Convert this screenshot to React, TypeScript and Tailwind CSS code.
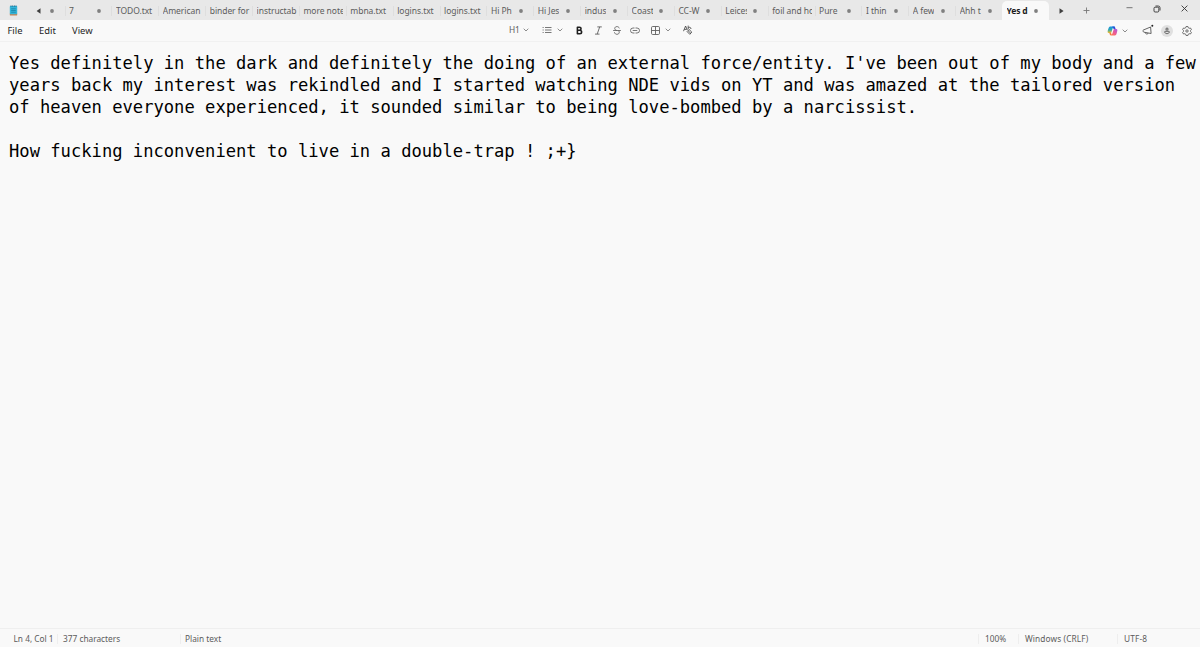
type Tab = {
  title: string;
  dirty?: boolean;
  active?: boolean;
};

const tabs: Tab[] = [
  { title: '7', dirty: true },
  { title: 'TODO.txt' },
  { title: 'American' },
  { title: 'binder for' },
  { title: 'instructab' },
  { title: 'more notes' },
  { title: 'mbna.txt' },
  { title: 'logins.txt' },
  { title: 'logins.txt' },
  { title: 'Hi Ph', dirty: true },
  { title: 'Hi Jess', dirty: true },
  { title: 'indus', dirty: true },
  { title: 'Coastal', dirty: true },
  { title: 'CC-W', dirty: true },
  { title: 'Leicest', dirty: true },
  { title: 'foil and hou' },
  { title: 'Pure', dirty: true },
  { title: 'I thin', dirty: true },
  { title: 'A few', dirty: true },
  { title: 'Ahh t', dirty: true },
  { title: 'Yes d', dirty: true, active: true },
];

const lines = [
  "Yes definitely in the dark and definitely the doing of an external force/entity. I've been out of my body and a few",
  'years back my interest was rekindled and I started watching NDE vids on YT and was amazed at the tailored version',
  'of heaven everyone experienced, it sounded similar to being love-bombed by a narcissist.',
  '',
  'How fucking inconvenient to live in a double-trap ! ;+}',
];

export default function App() {
  return (
    <div className="flex h-[647px] w-[1200px] flex-col overflow-hidden bg-[#f9f9f9] font-['Noto_Sans','Open_Sans',sans-serif] text-[#5c5c5c]">
      <TitleBar />
      <Toolbar />
      <main className="flex-1 pl-[9px] pt-[10px] font-['DejaVu_Sans_Mono',monospace] text-[17.15px] leading-[22px] text-black">
        {lines.map((line, i) => (
          <p key={i} className="h-[22px] whitespace-pre">{line}</p>
        ))}
      </main>
      <StatusBar />
    </div>
  );
}

function TitleBar() {
  return (
    <header className="flex h-5 shrink-0 bg-[#e8e8e8]">
      <div className="flex w-6 items-center pl-[9px]">
        <NotepadIcon />
      </div>
      <div className="flex w-[40.5px] items-center pl-[11.5px] pt-px">
        <svg width="5" height="6" viewBox="0 0 5 6"><path d="M4.5 0.3v5.4L0.6 3z" fill="#404040" /></svg>
        <UnsavedDot className="ml-[9px]" />
      </div>
      {tabs.map((tab, i) => (
        <TabItem key={i} tab={tab} />
      ))}
      <div className="flex flex-1 items-center pl-[10px] pt-px">
        <svg width="5" height="6" viewBox="0 0 5 6"><path d="M0.5 0.3v5.4L4.6 3z" fill="#404040" /></svg>
        <svg className="ml-[19px]" width="7" height="7" viewBox="0 0 7 7"><path d="M3.5 0.5v6M0.5 3.5h6" stroke="#777" strokeWidth="0.9" /></svg>
      </div>
      <div className="flex h-[17px] items-center">
        <svg className="mr-5" width="7" height="7" viewBox="0 0 7 7"><path d="M0.5 2.7h6" stroke="#555" strokeWidth="0.8" /></svg>
        <svg className="mr-5" width="8" height="8" viewBox="0 0 8 8" fill="none" stroke="#333" strokeWidth="0.9">
          <rect x="1" y="2.2" width="4.8" height="4.8" rx="1.1" />
          <path d="M2.5 1h2.7Q7 1 7 2.8v2.7" />
        </svg>
        <svg className="mr-3" width="7" height="7" viewBox="0 0 7 7"><path d="M0.6 0.6l5.8 5.8M6.4 0.6L0.6 6.4" stroke="#333" strokeWidth="0.9" /></svg>
      </div>
    </header>
  );
}

function UnsavedDot({ className = '' }: { className?: string }) {
  return (
    <svg className={`shrink-0 ${className}`} width="4" height="4" viewBox="0 0 4 4">
      <circle cx="2" cy="2" r="1.9" fill="#808080" />
    </svg>
  );
}

function TabItem({ tab }: { tab: Tab }) {
  return (
    <div
      className={`flex w-[46.88px] shrink-0 items-center text-[8.5px] leading-[18px] ${
        tab.active ? 'mt-px rounded-t-[5px] bg-[#f9f9f9] font-bold text-[#1c1c1c]' : 'pt-px'
      }`}
    >
      {!tab.active && <span className="-mr-px h-2.5 w-px bg-[#dedede]" />}
      <span
        className={`ml-[4.6px] overflow-hidden whitespace-nowrap ${tab.dirty ? 'w-[21.5px]' : 'w-[40px]'} ${
          tab.active ? 'tracking-[-0.2px]' : 'tracking-[-0.06px]'
        }`}
      >
        {tab.title}
      </span>
      {tab.dirty && <UnsavedDot className="ml-[6.3px]" />}
    </div>
  );
}

function Chevron({ className = '' }: { className?: string }) {
  return (
    <svg className={className} width="6" height="4" viewBox="0 0 6 4" fill="none">
      <path d="M0.7 0.7L3 3l2.3-2.3" stroke="#707070" strokeWidth="0.8" />
    </svg>
  );
}

function Toolbar() {
  return (
    <nav className="flex h-[22px] shrink-0 items-center border-b border-[#f1f1f1]">
      <div className="flex w-[509px] gap-[15.5px] pl-[7.5px] pt-px text-[9.4px] text-[#242424]">
        <span className="w-4">File</span>
        <span className="w-[17.5px]">Edit</span>
        <span>View</span>
      </div>

      <div className="flex flex-1 items-center text-[#606060]">
        <span className="w-[11px] text-[8.4px] tracking-[-0.1px]">H1</span>
        <Chevron className="ml-[3px]" />
        <svg className="ml-[12.5px]" width="10" height="8" viewBox="0 0 10 8" stroke="currentColor" strokeWidth="0.85">
          <path d="M3 1.5h6.5M3 4h6.5M3 6.5h6.5M0.6 1.5h1.1M0.6 4h1.1M0.6 6.5h1.1" />
        </svg>
        <Chevron className="ml-[5px]" />
        {/* bold */}
        <svg className="ml-[13px]" width="7" height="9" viewBox="0 0 7 9" fill="none" stroke="#1f1f1f" strokeWidth="1.6" strokeLinejoin="round">
          <path d="M1.4 1.2h2.1a1.5 1.5 0 0 1 0 3.1H1.4zM1.4 4.3h2.5a1.7 1.7 0 0 1 0 3.4H1.4z" />
        </svg>
        {/* italic */}
        <svg className="ml-[11px]" width="9" height="9" viewBox="0 0 9 9" fill="none" stroke="currentColor" strokeWidth="0.9">
          <path d="M3.3 0.9h4.5M1 8.1h4.5M5.7 0.9L3.2 8.1" />
        </svg>
        {/* strikethrough */}
        <svg className="ml-[10px]" width="8" height="9" viewBox="0 0 8 9" fill="none" stroke="currentColor" strokeWidth="0.85" strokeLinecap="round">
          <path d="M6.2 2C5.8.9 4.9.6 4 .6 2.7.6 1.7 1.3 1.7 2.5c0 1 .8 1.6 2 2M0.5 4.5h7M5.5 4.8c.6.4.8.8.8 1.4C6.3 7.5 5.3 8.3 4 8.3 2.8 8.3 1.8 7.8 1.5 6.6" />
        </svg>
        {/* link */}
        <svg className="ml-[9.5px]" width="10" height="7" viewBox="0 0 10 7" fill="none" stroke="currentColor" strokeWidth="0.85" strokeLinecap="round">
          <path d="M4.1 1H3a2.5 2.5 0 0 0 0 5h1.1M5.9 1H7a2.5 2.5 0 0 1 0 5H5.9M3.1 3.5h3.8" />
        </svg>
        {/* table */}
        <svg className="ml-[11px]" width="9" height="9" viewBox="0 0 9 9" fill="none" stroke="currentColor" strokeWidth="0.9">
          <rect x="0.5" y="0.5" width="8" height="8" rx="1.2" />
          <path d="M4.5 0.5v8M0.5 4.5h8" />
        </svg>
        <Chevron className="ml-[5px]" />
        {/* clear formatting */}
        <svg className="ml-[11.5px]" width="10" height="10" viewBox="0 0 10 10" fill="none" stroke="#444" strokeWidth="0.85" strokeLinejoin="round">
          <path d="M0.5 6.2L2.6 1 4.3 5M1.3 4.4h2.3M5.2 0.6v3.6M5.2 3c.6-1.2 2.9-1 2.8 1" />
          <path d="M6.1 4.5l2.7 2.6-2 2.2-2.7-2.7zM5 5.6l2.8 2.7" />
        </svg>
      </div>

      <div className="flex items-center">
        <CopilotIcon />
        <Chevron className="ml-1" />
        {/* megaphone with a notification dot */}
        <svg className="-mt-[2px] ml-[13.5px]" width="12" height="12" viewBox="0 0 12 12" fill="none" stroke="#555" strokeWidth="0.9" strokeLinejoin="round">
          <path d="M8.6 3L1.4 6q-.6.3-.4.9l.3.8q.2.5.8.5l7 1.3zM3.2 8.500c.3 1.900 2.800 2 3 .5" />
          <circle cx="10.3" cy="1.8" r="1" fill="#222" stroke="none" />
        </svg>
        <span className="ml-[7px] flex h-3 w-3 items-center justify-center rounded-full bg-[#e0e0e0]">
          <svg width="6" height="8" viewBox="0 0 6 8" fill="none" stroke="#444" strokeWidth="0.8">
            <circle cx="3" cy="2.1" r="1.1" />
            <path d="M1.3 4.3h3.4q.6 0 .6.6c0 2.3-4.6 2.3-4.6 0q0-.6.6-.6z" />
          </svg>
        </span>
        {/* settings */}
        <svg className="ml-[9.5px] mr-2" width="10" height="10" viewBox="0 0 10 10" fill="none" stroke="#555" strokeWidth="0.85" strokeLinejoin="round">
          <path d="M4.1.5h1.8l.4 1.3.8.5 1.4-.3.9 1.6-.9 1v.8l.9 1-.9 1.6-1.4-.3-.8.5-.4 1.3H4.1l-.4-1.3-.8-.5-1.4.3-.9-1.6.9-1v-.8l-.9-1 .9-1.6 1.4.3.8-.5z" />
          <circle cx="5" cy="5" r="1.2" />
        </svg>
      </div>
    </nav>
  );
}

function StatusBar() {
  return (
    <footer className="flex h-[19px] shrink-0 items-center border-t border-[#efefef] pt-px text-[8.3px] leading-[10px]">
      <span className="w-[57px] pl-[13.5px]">Ln 4, Col 1</span>
      <span className="w-[122.5px] border-l border-[#eeeeee] pl-[5px]">377 characters</span>
      <span className="flex-1 border-l border-[#eeeeee] pl-[4.5px]">Plain text</span>
      <span className="w-10 border-l border-[#eeeeee] pl-1.5">100%</span>
      <span className="w-[99px] border-l border-[#eeeeee] pl-1.5 tracking-[0.12px]">Windows (CRLF)</span>
      <span className="w-[83px] border-l border-[#eeeeee] pl-1.5 tracking-[0.15px]">UTF-8</span>
    </footer>
  );
}

function NotepadIcon() {
  return (
    <svg width="9" height="11" viewBox="0 0 9 11">
      <rect x="0.8" y="8" width="7.4" height="2.6" rx="0.7" fill="#c78453" />
      <rect x="0.8" y="1" width="7.4" height="8.2" rx="0.7" fill="#35b5d9" />
      <path d="M2.2 3.8h4.6M2.2 5.5h4.6M2.2 7.2h4.6" stroke="#147b9f" strokeWidth="0.7" />
      <path d="M2 .3v1.5M3.7.3v1.5M5.4.3v1.5M7 .3v1.5" stroke="#125f82" strokeWidth="0.7" />
    </svg>
  );
}

function CopilotIcon() {
  return (
    <svg width="11" height="10" viewBox="0 0 11 10" fill="none">
      <defs>
        <linearGradient id="cool" x1="0" y1="0" x2="0" y2="1">
          <stop stopColor="#168de2" />
          <stop offset="0.5" stopColor="#2fa9b0" />
          <stop offset="1" stopColor="#f4bf24" />
        </linearGradient>
        <linearGradient id="warm" x1="1" y1="0" x2="0" y2="1">
          <stop stopColor="#a85be8" />
          <stop offset="0.5" stopColor="#ef5a91" />
          <stop offset="1" stopColor="#ff8a3d" />
        </linearGradient>
      </defs>
      <path d="M7.2.5H3.3C1.9.5 1.6 2 1.1 3.6.5 5.5.2 7 1.8 7h1.6c.7 0 1-.5 1.2-1.2l.9-3C5.8 2 6.1 1.7 6.8 1.7H8C7.8 1 7.7.5 7.2.5z" fill="url(#cool)" />
      <path d="M3.8 9.5h3.9c1.4 0 1.7-1.5 2.2-3.1.6-1.9.9-3.4-.7-3.4H7.6c-.7 0-1 .5-1.2 1.2l-.9 3C5.2 8 4.9 8.3 4.2 8.3H3c.2.7.3 1.2.8 1.2z" fill="url(#warm)" />
      <path d="M5 .5h2.3c.7 0 .9.9 1.3 2.5H6.6C6 2.2 6 1 5 .5z" fill="#2852d8" />
      <path d="M2.3 6.8h2c-.1.9.1 1.5-.6 2.5-.9 0-1-1.300-1.400-2.500z" fill="#f47b3a" />
    </svg>
  );
}
